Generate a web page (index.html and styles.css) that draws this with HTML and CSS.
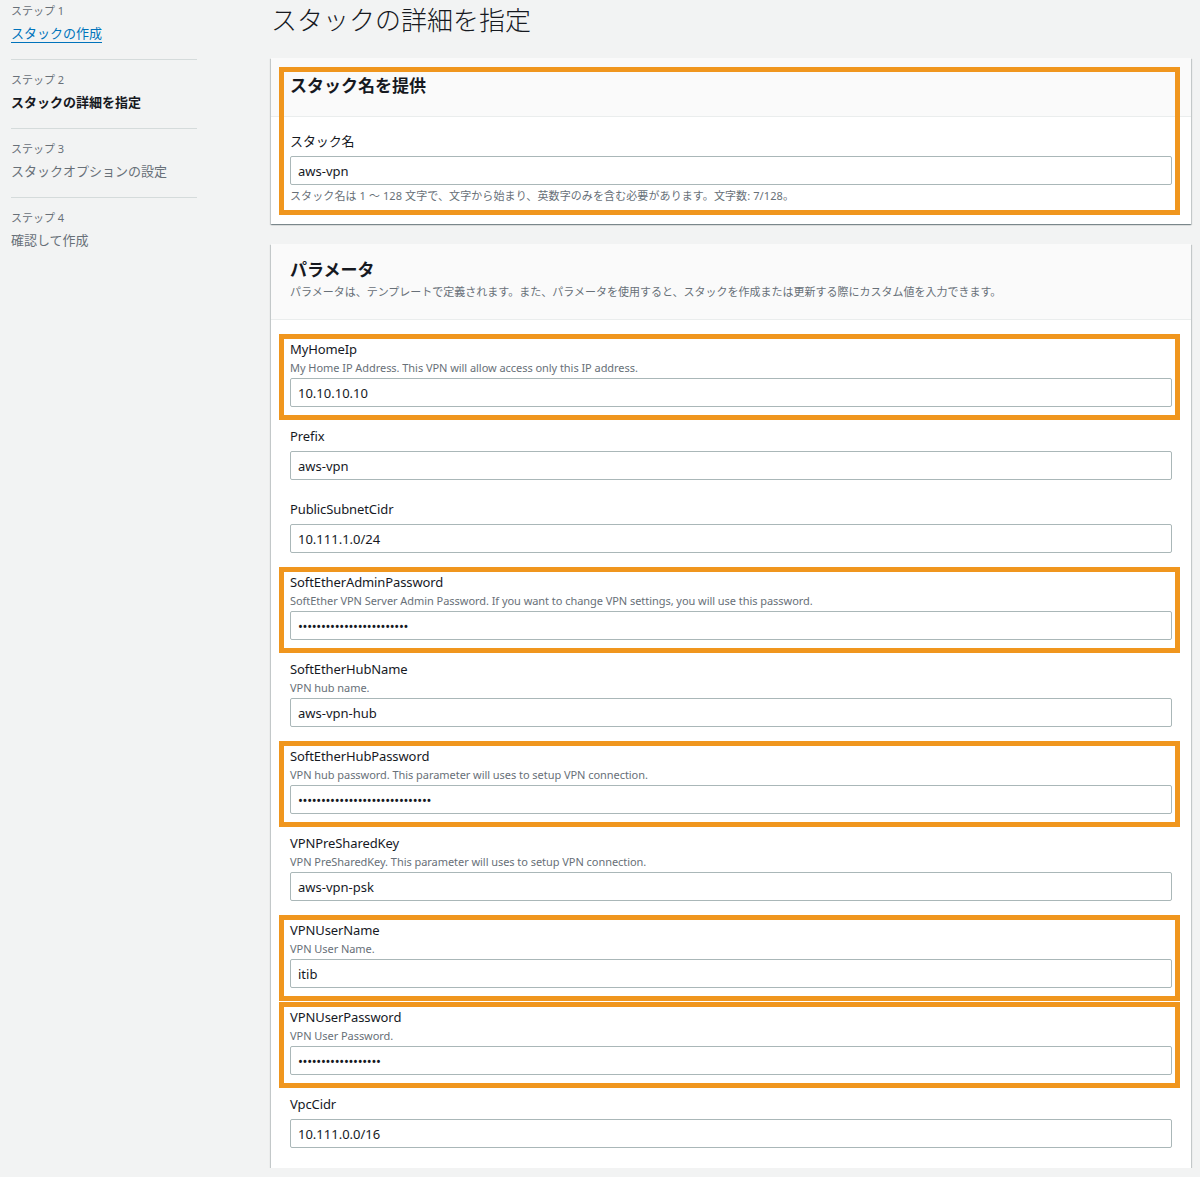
FILE: index.html
```html
<!DOCTYPE html>
<html lang="ja">
<head>
    <meta charset="UTF-8">
    <meta name="viewport" content="width=device-width, initial-scale=1.0">
    <title>スタックの詳細を指定</title>
    <link rel="stylesheet" href="styles.css">
</head>
<body>
    <div class="page">
        <!-- Wizard steps -->
        <nav class="steps">
            <div class="step">
                <span class="step-num">ステップ 1</span>
                <a class="step-title link" href="#">スタックの作成</a>
            </div>
            <div class="step">
                <span class="step-num">ステップ 2</span>
                <span class="step-title current">スタックの詳細を指定</span>
            </div>
            <div class="step">
                <span class="step-num">ステップ 3</span>
                <span class="step-title">スタックオプションの設定</span>
            </div>
            <div class="step">
                <span class="step-num">ステップ 4</span>
                <span class="step-title">確認して作成</span>
            </div>
        </nav>

        <main class="content">
            <h1>スタックの詳細を指定</h1>

            <!-- Stack name -->
            <section class="card marked">
                <div class="card-head first">
                    <h2>スタック名を提供</h2>
                </div>
                <div class="card-body first">
                    <div class="field">
                        <label for="stack-name">スタック名</label>
                        <input type="text" id="stack-name" value="aws-vpn" readonly>
                        <p class="hint">スタック名は 1 〜 128 文字で、文字から始まり、英数字のみを含む必要があります。文字数: 7/128。</p>
                    </div>
                </div>
            </section>

            <!-- Parameters -->
            <section class="card">
                <div class="card-head">
                    <h2>パラメータ</h2>
                    <p class="desc">パラメータは、テンプレートで定義されます。また、パラメータを使用すると、スタックを作成または更新する際にカスタム値を入力できます。</p>
                </div>
                <div class="card-body params">
                    <div class="field marked">
                        <label for="p-home">MyHomeIp</label>
                        <p class="desc">My Home IP Address. This VPN will allow access only this IP address.</p>
                        <input type="text" id="p-home" value="10.10.10.10" readonly>
                    </div>
                    <div class="field">
                        <label for="p-prefix">Prefix</label>
                        <input type="text" id="p-prefix" value="aws-vpn" readonly>
                    </div>
                    <div class="field">
                        <label for="p-subnet">PublicSubnetCidr</label>
                        <input type="text" id="p-subnet" value="10.111.1.0/24" readonly>
                    </div>
                    <div class="field marked">
                        <label for="p-admin">SoftEtherAdminPassword</label>
                        <p class="desc">SoftEther VPN Server Admin Password. If you want to change VPN settings, you will use this password.</p>
                        <input type="password" id="p-admin" value="xxxxxxxxxxxxxxxxxxxxxxxx" readonly>
                    </div>
                    <div class="field">
                        <label for="p-hub">SoftEtherHubName</label>
                        <p class="desc">VPN hub name.</p>
                        <input type="text" id="p-hub" value="aws-vpn-hub" readonly>
                    </div>
                    <div class="field marked">
                        <label for="p-hubpw">SoftEtherHubPassword</label>
                        <p class="desc">VPN hub password. This parameter will uses to setup VPN connection.</p>
                        <input type="password" id="p-hubpw" value="xxxxxxxxxxxxxxxxxxxxxxxxxxxxx" readonly>
                    </div>
                    <div class="field">
                        <label for="p-psk">VPNPreSharedKey</label>
                        <p class="desc">VPN PreSharedKey. This parameter will uses to setup VPN connection.</p>
                        <input type="text" id="p-psk" value="aws-vpn-psk" readonly>
                    </div>
                    <div class="field marked">
                        <label for="p-user">VPNUserName</label>
                        <p class="desc">VPN User Name.</p>
                        <input type="text" id="p-user" value="itib" readonly>
                    </div>
                    <div class="field marked">
                        <label for="p-userpw">VPNUserPassword</label>
                        <p class="desc">VPN User Password.</p>
                        <input type="password" id="p-userpw" value="xxxxxxxxxxxxxxxxxx" readonly>
                    </div>
                    <div class="field">
                        <label for="p-vpc">VpcCidr</label>
                        <input type="text" id="p-vpc" value="10.111.0.0/16" readonly>
                    </div>
                </div>
            </section>
        </main>
    </div>
</body>
</html>
```

FILE: styles.css
```css
/* Colors */
:root {
    --page-bg: #f2f3f3;
    --text: #16191f;
    --muted: #687078;
    --link: #0073bb;
    --line: #d5dbdb;
    --input-border: #aab7b8;
    --mark: #f0961e;
}

body {
    margin: 0;
    background: var(--page-bg);
    color: var(--text);
    font-family: "Noto Sans", "Noto Sans CJK JP", sans-serif;
}

.page {
    display: grid;
    grid-template-columns: 186px 920px;
    column-gap: 74px;
    padding-left: 11px;
}

/* Steps */
.steps {
    display: flex;
    flex-direction: column;
}

.step {
    display: flex;
    flex-direction: column;
    padding: 12px 0 16px;
    border-top: 1px solid var(--line);
}

.step:first-child {
    padding-top: 3px;
    border-top: none;
}

.step-num {
    font-size: 11px;
    line-height: 16px;
    color: var(--muted);
}

.step-title {
    margin-top: 4px;
    font-size: 13px;
    line-height: 20px;
    color: var(--muted);
}

.step-title.link {
    align-self: flex-start;
    color: var(--link);
    text-decoration: underline;
    text-underline-offset: 4px;
}

.step-title.current {
    font-weight: bold;
    color: var(--text);
}

/* Main column */
.content {
    padding-top: 3px;
    display: flex;
    flex-direction: column;
    gap: 20px;
}

h1 {
    margin: 0 0 1px;
    font-size: 26px;
    line-height: 34px;
    font-weight: 300;
    color: var(--text);
}

/* Cards */
.card {
    position: relative;
    background: #fff;
    box-shadow: 0 1px 1px 0 rgba(0, 28, 36, 0.3),
                1px 1px 1px 0 rgba(0, 28, 36, 0.15),
                -1px 1px 1px 0 rgba(0, 28, 36, 0.15);
}

.card-head {
    background: #fafafa;
    border-bottom: 1px solid #eaeded;
    padding: 15px 19px 19px;
}

.card-head.first {
    padding-top: 17px;
}

h2 {
    margin: 0;
    font-size: 17px;
    line-height: 22px;
    font-weight: bold;
}

.card-head .desc {
    margin-top: 3px;
}

.card-body {
    padding: 19px 19px 20px;
}

.card-body.first {
    padding: 14px 19px 20px;
}

.params {
    display: flex;
    flex-direction: column;
    gap: 19px;
}

/* Fields */
.field {
    position: relative;
    display: flex;
    flex-direction: column;
}

label {
    font-size: 13px;
    line-height: 20px;
    margin-bottom: 5px;
    letter-spacing: -0.1px;
    color: var(--text);
}

.desc,
.hint {
    margin: 0;
    font-size: 11px;
    line-height: 16px;
    color: var(--muted);
}

.field .desc {
    margin: -4px 0 2px;
    letter-spacing: -0.05px;
}

.hint {
    margin-top: 3px;
    letter-spacing: 0.1px;
}

input {
    box-sizing: border-box;
    height: 29px;
    width: 100%;
    margin: 0;
    padding: 0 7px;
    border: 1px solid var(--input-border);
    border-radius: 2px;
    background: #fff;
    font-family: "Noto Sans", "Noto Sans CJK JP", sans-serif;
    font-size: 13px;
    color: var(--text);
    outline: none;
}

input[type="password"] {
    font-size: 13px;
    letter-spacing: -0.3px;
}

/* Orange highlight frames */
.marked::after {
    content: "";
    position: absolute;
    border: 5px solid var(--mark);
    pointer-events: none;
}

.card.marked::after {
    top: 9px;
    right: 11px;
    bottom: 9px;
    left: 8px;
}

.field.marked::after {
    top: -5px;
    right: -8px;
    bottom: -13px;
    left: -11px;
}
```
